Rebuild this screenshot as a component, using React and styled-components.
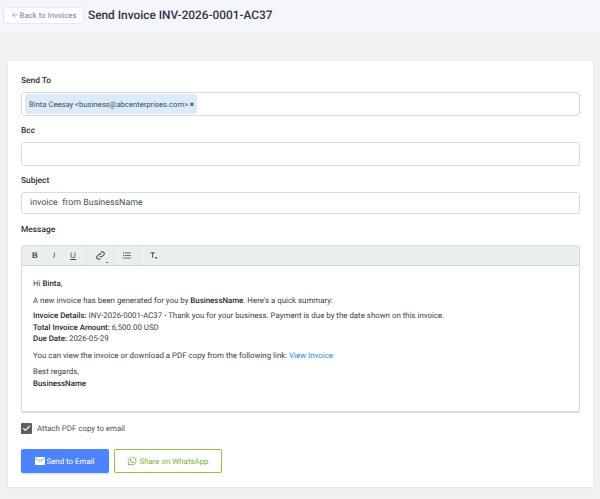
import React from "react";
import styled, { createGlobalStyle } from "styled-components";
import { ArrowLeft, Check } from "lucide-react";
import { FaWhatsapp } from "react-icons/fa";

const Global = createGlobalStyle`
  html, body { margin: 0; padding: 0; background: #f1f1f1; }
  body {
    font-family: Roboto, "Liberation Sans", sans-serif;
    color: #343a40;
    text-rendering: geometricPrecision;
  }
  * { box-sizing: border-box; }
`;

const Page = styled.div`
  width: 600px;
  height: 499px;
  overflow: hidden;
`;
const Header = styled.header`
  height: 33px;
  background: #f5f6fb;
  display: flex;
  align-items: center;
  gap: 4px;
  padding: 0 0 3px 3px;
`;
const BackButton = styled.button`
  height: 17px;
  width: 81px;
  padding: 0;
  background: #fff;
  border: 1px solid #e6e8ee;
  border-radius: 3px;
  color: #7b8190;
  font: 400 7.85px Roboto, sans-serif;
  text-rendering: geometricPrecision;
  display: flex;
  align-items: center;
  justify-content: center;
  gap: 1px;
`;
const Title = styled.h1`
  margin: 0;
  font: 500 11.85px Roboto, sans-serif;
  color: #2f3345;
`;
const Card = styled.main`
  margin: 28px 7px 0 8px;
  height: 426px;
  background: #fff;
  box-shadow: 0 1px 2px rgba(0, 0, 0, 0.08);
  padding: 13px 13px 0;
`;
const Label = styled.label`
  display: block;
  height: ${(p) => p.$h || 18}px;
  padding-top: 1px;
  font: 500 8.4px/12px Roboto, sans-serif;
  color: #2d3035;
`;
const Field = styled.div`
  height: ${(p) => p.$h || 24}px;
  margin-bottom: ${(p) => p.$mb || 8}px;
  border: 1px solid #d9dcdf;
  border-radius: 3px;
  display: flex;
  align-items: center;
  padding: 0 3px;
`;
const SubjectField = styled(Field)`
  padding: 0 8px;
  font-size: 8.87px;
  color: #4a4f55;
`;
const Chip = styled.span`
  height: 20px;
  width: 172px;
  background: #dcebf9;
  border-radius: 2px;
  display: flex;
  align-items: center;
  justify-content: space-between;
  padding: 0 3px 0 4px;
  font-size: 7.66px;
  color: #454f5b;
  white-space: nowrap;
`;
const ChipX = styled.b`
  font-size: 8px;
  color: #333;
`;
const Toolbar = styled.div`
  height: 21px;
  background: #ebeeef;
  border: 1px solid #d9dcdf;
  border-bottom: 1px solid #d0d3d6;
  border-radius: 3px 3px 0 0;
  display: flex;
  align-items: center;
  color: #444;
`;
const ToolGroup = styled.div`
  display: flex;
  align-items: center;
  height: 100%;
  padding: 0 ${(p) => p.$pad}px;
  border-right: ${(p) => (p.$last ? "none" : "1px solid #dfe2e3")};
`;
const Tool = styled.span`
  width: 19px;
  display: flex;
  justify-content: center;
  position: relative;
  font: ${(p) => p.$weight || 400} 8px "Liberation Sans", sans-serif;
  font-style: ${(p) => (p.$italic ? "italic" : "normal")};
  text-decoration: ${(p) => (p.$under ? "underline" : "none")};
`;
const Caret = styled.i`
  position: absolute;
  right: 2px;
  bottom: -3px;
  width: 2px;
  height: 1px;
  background: #666;
`;
const Editor = styled.div`
  height: 147px;
  border: 1px solid #d9dcdf;
  border-top: none;
  border-bottom-width: 2px;
  border-radius: 0 0 3px 3px;
  padding: 12px 11px 0;
  font-size: 7.88px;
  line-height: 11.5px;
  color: #3c4045;
`;
const Para = styled.p`
  margin: 0 0 ${(p) => p.$mb ?? 5}px;
`;
const Strong = styled.strong`
  font-weight: 500;
  color: #24272b;
`;
const LinkText = styled.a`
  color: #1e88e5;
`;
const CheckRow = styled.div`
  display: flex;
  align-items: center;
  gap: 5px;
  margin-top: 9px;
  height: 12px;
  font-size: 7.86px;
  color: #4c5157;
`;
const CheckBox = styled.span`
  width: 11px;
  height: 11px;
  background: #5f5f5f;
  border-radius: 1px;
  color: #fff;
  display: flex;
  align-items: center;
  justify-content: center;
`;
const Actions = styled.div`
  display: flex;
  gap: 5px;
  margin-top: 15px;
`;
const PrimaryButton = styled.button`
  width: 88px;
  height: 24px;
  padding: 0;
  background: #4d84fd;
  border: none;
  border-radius: 2px;
  box-shadow: 0 1px 2px rgba(77, 132, 253, 0.3);
  color: #fff;
  font: 400 7.88px Roboto, sans-serif;
  text-rendering: geometricPrecision;
  display: flex;
  align-items: center;
  justify-content: center;
  gap: 1px;
`;
const OutlineButton = styled(PrimaryButton)`
  width: 108px;
  background: #fff;
  border: 1px solid #8cc63f;
  box-shadow: none;
  color: #7cb342;
  gap: 2px;
`;

const Icons = {
  Link: () => (
    <svg width="9" height="9" viewBox="0 0 24 24" fill="none" stroke="#444" strokeWidth="2.8">
      <path d="M10 14a5 5 0 0 0 7 0l4-4a5 5 0 0 0-7-7l-1.5 1.5" />
      <path d="M14 10a5 5 0 0 0-7 0l-4 4a5 5 0 0 0 7 7l1.5-1.5" />
    </svg>
  ),
  List: () => (
    <svg width="8" height="7" viewBox="0 0 20 18" fill="#444">
      <rect x="0" y="1" width="3" height="3" />
      <rect x="0" y="7.5" width="3" height="3" />
      <rect x="0" y="14" width="3" height="3" />
      <rect x="5" y="1.5" width="15" height="2" />
      <rect x="5" y="8" width="15" height="2" />
      <rect x="5" y="14.5" width="15" height="2" />
    </svg>
  ),
  Clear: () => (
    <svg width="8" height="7" viewBox="0 0 20 18" fill="#444">
      <rect x="1" y="1" width="11" height="2.4" />
      <rect x="5.3" y="1" width="2.4" height="14" />
      <rect x="13" y="13" width="5" height="3.5" />
    </svg>
  ),
  Mail: () => (
    <svg width="10" height="8" viewBox="0 0 20 16">
      <rect x="0" y="0" width="20" height="16" rx="1.5" fill="#fff" />
      <path d="M1 2.5l9 6 9-6" fill="none" stroke="#4d84fd" strokeWidth="1.4" />
    </svg>
  ),
};

export default function App() {
  return (
    <Page>
      <Global />
      <Header>
        <BackButton>
          <ArrowLeft size={8} strokeWidth={1.8} />
          Back to Invoices
        </BackButton>
        <Title>Send Invoice INV-2026-0001-AC37</Title>
      </Header>
      <Card>
        <Label>Send To</Label>
        <Field>
          <Chip>
            Binta Ceesay &lt;business@abcenterprises.com&gt; <ChipX>×</ChipX>
          </Chip>
        </Field>
        <Label>Bcc</Label>
        <Field />
        <Label>Subject</Label>
        <SubjectField $h={22} $mb={9}>invoice &nbsp;from BusinessName</SubjectField>
        <Label $h={22}>Message</Label>
        <Toolbar>
          <ToolGroup $pad={3.5}>
            <Tool $weight={700}>B</Tool>
            <Tool $italic>I</Tool>
            <Tool $under>U</Tool>
          </ToolGroup>
          <ToolGroup $pad={3.5}>
            <Tool><Icons.Link /><Caret /></Tool>
          </ToolGroup>
          <ToolGroup $pad={3}>
            <Tool><Icons.List /></Tool>
          </ToolGroup>
          <ToolGroup $last $pad={4}>
            <Tool><Icons.Clear /></Tool>
          </ToolGroup>
        </Toolbar>
        <Editor>
          <Para $mb={5.5}>Hi <Strong>Binta</Strong>,</Para>
          <Para $mb={3.5}>A new invoice has been generated for you by <Strong>BusinessName</Strong>. Here's a quick summary:</Para>
          <Para>
            <Strong>Invoice Details:</Strong> INV-2026-0001-AC37 - Thank you for your business. Payment is due by the date shown on this invoice.<br />
            <Strong>Total Invoice Amount:</Strong> 6,500.00 USD<br />
            <Strong>Due Date:</Strong> 2026-05-29
          </Para>
          <Para>You can view the invoice or download a PDF copy from the following link: <LinkText>View Invoice</LinkText></Para>
          <Para>Best regards,<br /><Strong>BusinessName</Strong></Para>
        </Editor>
        <CheckRow>
          <CheckBox><Check size={9} strokeWidth={3} /></CheckBox>
          Attach PDF copy to email
        </CheckRow>
        <Actions>
          <PrimaryButton><Icons.Mail /> Send to Email</PrimaryButton>
          <OutlineButton><FaWhatsapp size={10} /> Share on WhatsApp</OutlineButton>
        </Actions>
      </Card>
    </Page>
  );
}
